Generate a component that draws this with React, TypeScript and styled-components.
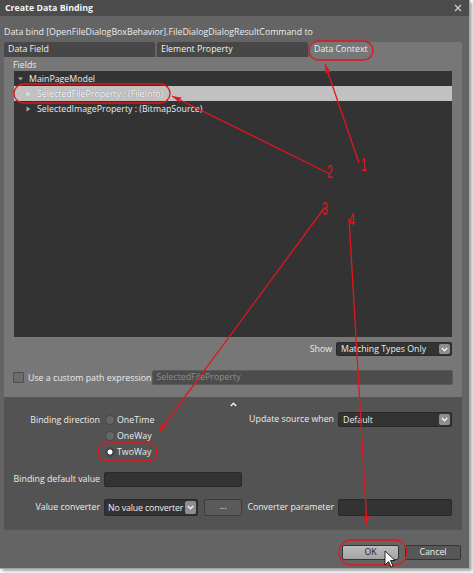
import React from "react";
import styled, { createGlobalStyle } from "styled-components";

const GlobalStyle = createGlobalStyle`
  html, body {
    margin: 0;
    background: #ffffff;
  }
  body {
    font-family: "Open Sans", "Noto Sans", sans-serif;
    font-size: 8.8px;
    color: #ececec;
  }
`;

const Page = styled.div`
  position: relative;
  width: 473px;
  height: 573px;
`;

const Dialog = styled.div`
  width: 470px;
  height: 569px;
  box-sizing: border-box;
  background: #646464;
  border-right: 1px solid #a4a4a4;
  border-bottom: 1px solid #a4a4a4;
  box-shadow: 2px 2px 3px rgba(0, 0, 0, 0.35);
  display: flex;
  flex-direction: column;
`;

const TitleBar = styled.div`
  height: 16px;
  flex: none;
  background: #4c4c4c;
  display: flex;
  align-items: center;
  justify-content: space-between;
  padding: 0 7px 0 5px;
  font-weight: 700;
  font-size: 8.8px;
  color: #f4f4f4;
`;

const Prompt = styled.div`
  height: 26px;
  box-sizing: border-box;
  padding: 6px 4px 0;
  line-height: 20px;
  white-space: nowrap;
`;

const TabStrip = styled.div`
  display: grid;
  grid-template-columns: 151px 151px 152px;
  column-gap: 2px;
  margin: 0 4px;
  height: 15px;
`;

const Tab = styled.div<{ $active?: boolean }>`
  background: ${(p) => (p.$active ? "#777777" : "#474747")};
  border-radius: 3px 3px 0 0;
  padding-left: 4px;
  line-height: 15px;
  color: #f0f0f0;
`;

const Panel = styled.div`
  width: 458px;
  margin: 0 4px;
  background: #777777;
  display: flex;
  flex-direction: column;
`;

const Upper = styled.div`
  padding: 3px 10px 12px;
  display: flex;
  flex-direction: column;
`;

const Caption = styled.div`
  line-height: 11px;
  margin-left: -1px;
`;

const Tree = styled.div`
  height: 266px;
  background: #333333;
`;

const TreeRow = styled.div<{ $level: number; $selected?: boolean }>`
  height: 15px;
  display: flex;
  align-items: center;
  padding-left: ${(p) => p.$level * 8 + 4}px;
  background: ${(p) => (p.$selected ? "#c1c1c1" : "transparent")};
  color: ${(p) => (p.$selected ? "#ffffff" : "#ececec")};
  text-shadow: ${(p) => (p.$selected ? "0 0 1px #6a6a6a" : "none")};
  white-space: nowrap;
`;

const Toggle = styled.svg`
  width: 5px;
  height: 6px;
  margin-right: 6px;
  flex: none;
`;

const ShowRow = styled.div`
  margin-top: 5px;
  height: 14px;
  display: flex;
  justify-content: flex-end;
  align-items: center;
  gap: 4px;
`;

const Select = styled.div<{ $width: number; $height: number; $compact?: boolean }>`
  width: ${(p) => p.$width}px;
  height: ${(p) => p.$height}px;
  box-sizing: border-box;
  display: flex;
  align-items: center;
  background: #333333;
  border: 1px solid #292929;
  border-radius: 2px;
  padding-left: ${(p) => (p.$compact ? 3 : 4)}px;
  letter-spacing: ${(p) => (p.$compact ? "-0.15px" : "normal")};
  white-space: nowrap;
  overflow: hidden;
`;

const SelectValue = styled.span`
  flex: 1;
  overflow: hidden;
`;

const DropButton = styled.div`
  flex: none;
  width: 11px;
  align-self: stretch;
  margin: 1px;
  background: #8e8e8e;
  border-radius: 2px;
  display: flex;
  align-items: center;
  justify-content: center;
`;

const PathRow = styled.div`
  margin-top: 14px;
  height: 15px;
  display: flex;
  align-items: center;
  white-space: nowrap;
`;

const Checkbox = styled.div`
  width: 11px;
  height: 11px;
  flex: none;
  box-sizing: border-box;
  margin-left: -1px;
  margin-right: 4px;
  border: 1px solid #4e4e4e;
  background: #6c6c6c;
  border-radius: 1px;
`;

const TextBox = styled.div<{ $muted?: boolean; $height?: number }>`
  height: ${(p) => p.$height ?? 15}px;
  box-sizing: border-box;
  background: ${(p) => (p.$muted ? "#4c4c4c" : "#333333")};
  border: 1px solid ${(p) => (p.$muted ? "#5a5a5a" : "#292929")};
  border-radius: 2px;
  padding-left: 4px;
  line-height: 13px;
  color: #8d8d8d;
`;

const PathInput = styled(TextBox)`
  margin-left: auto;
  width: 301px;
  flex: none;
`;

const Lower = styled.div`
  background: #535353;
  padding-bottom: 14px;
`;

const CollapseRow = styled.div`
  height: 15px;
  display: flex;
  align-items: center;
  justify-content: center;
`;

const FormGrid = styled.div`
  display: grid;
  grid-template-columns: 96px 138px 88px 114px;
  column-gap: 4px;
  row-gap: 12px;
`;

const FieldLabel = styled.div<{ $height?: number }>`
  text-align: right;
  align-self: start;
  line-height: ${(p) => p.$height ?? 15}px;
  white-space: nowrap;
`;

const RadioGroup = styled.div`
  display: flex;
  flex-direction: column;
`;

const RadioItem = styled.div`
  height: 16px;
  display: flex;
  align-items: center;
  gap: 2px;
`;

const RadioDot = styled.div<{ $checked?: boolean }>`
  width: 10px;
  height: 10px;
  box-sizing: border-box;
  margin-left: 1px;
  border-radius: 50%;
  border: 1px solid #474747;
  background: ${(p) =>
    p.$checked
      ? "radial-gradient(circle, #ffffff 0 2.2px, #444444 2.8px)"
      : "#666666"};
`;

const ConverterCell = styled.div`
  display: flex;
  gap: 6px;
`;

const SmallButton = styled.div`
  width: 38px;
  height: 17px;
  box-sizing: border-box;
  border: 1px solid #3c3c3c;
  border-radius: 2px;
  background: #5a5a5a;
  text-align: center;
  line-height: 13px;
`;

const Footer = styled.div`
  display: flex;
  justify-content: flex-end;
  gap: 6px;
  padding: 15px 8px 0 0;
`;

const Button = styled.div<{ $primary?: boolean; $width: number }>`
  width: ${(p) => p.$width}px;
  height: 15px;
  box-sizing: border-box;
  border: 1px solid #353535;
  border-radius: 2px;
  text-align: center;
  line-height: 13px;
  background: ${(p) =>
    p.$primary ? "linear-gradient(#bdbdbd, #a4a4a4)" : "#575757"};
  color: ${(p) => (p.$primary ? "#1e1e1e" : "#efefef")};
`;

const Overlay = styled.svg`
  position: absolute;
  left: 0;
  top: 0;
  pointer-events: none;
`;

const Chevron = ({ up }: { up?: boolean }) => (
  <svg width="7" height="5" viewBox="0 0 7 5">
    <path
      d={up ? "M0.8 4 L3.5 1.3 L6.2 4" : "M0.8 1 L3.5 3.7 L6.2 1"}
      fill="none"
      stroke="#f2f2f2"
      strokeWidth="1.4"
    />
  </svg>
);

const Expander = ({ open, color }: { open?: boolean; color: string }) => (
  <Toggle viewBox="0 0 5 6">
    <path d={open ? "M0 1.5 L5 1.5 L2.5 4.5 Z" : "M0.5 0.5 L4.5 3 L0.5 5.5 Z"} fill={color} />
  </Toggle>
);

const RED = "#e3161d";

const arrows = [
  { x1: 359, y1: 163, x2: 325, y2: 64 },
  { x1: 330, y1: 174, x2: 172, y2: 96 },
  { x1: 325, y1: 207, x2: 159, y2: 432 },
  { x1: 349, y1: 218, x2: 367, y2: 525 },
];

const marks = [
  { n: "1", x: 361, y: 171 },
  { n: "2", x: 327, y: 178 },
  { n: "3", x: 322, y: 215 },
  { n: "4", x: 349, y: 226 },
];

const rings = [
  { x: 309, y: 41, w: 64, h: 19 },
  { x: 14, y: 84, w: 156, h: 19 },
  { x: 98, y: 443, w: 59, h: 18 },
  { x: 339, y: 540, w: 68, h: 25 },
];

function Annotations() {
  return (
    <Overlay width="473" height="573" viewBox="0 0 473 573">
      <defs>
        <marker id="tip" viewBox="0 0 10 6" refX="10" refY="3" markerWidth="10" markerHeight="6" markerUnits="userSpaceOnUse" orient="auto">
          <path d="M0 0 L10 3 L0 6 L2 3 Z" fill={RED} />
        </marker>
      </defs>
      {rings.map((r, i) => (
        <rect key={i} x={r.x} y={r.y} width={r.w} height={r.h} rx={r.h / 2} fill="none" stroke={RED} strokeWidth="1.3" />
      ))}
      {arrows.map((a, i) => (
        <line key={i} {...a} stroke={RED} strokeWidth="1.3" markerEnd="url(#tip)" />
      ))}
      {marks.map((m) => (
        <text
          key={m.n}
          transform={`translate(${m.x} ${m.y}) scale(0.55 1)`}
          fill={RED}
          fontSize="19"
          fontFamily='"Liberation Sans", sans-serif'
        >
          {m.n}
        </text>
      ))}
      <path
        d="M385 551 L385 565 L388.5 561.5 L391 567 L393 566 L390.5 560.5 L395 560.5 Z"
        fill="#ffffff"
        stroke="#000000"
        strokeWidth="0.8"
        strokeLinejoin="round"
      />
    </Overlay>
  );
}

export default function App() {
  return (
    <Page>
      <GlobalStyle />
      <Dialog>
        <TitleBar>
          <span>Create Data Binding</span>
          <svg width="8" height="8" viewBox="0 0 8 8">
            <path d="M1 1 L7 7 M7 1 L1 7" stroke="#cfcfcf" strokeWidth="1.2" />
          </svg>
        </TitleBar>
        <Prompt>Data bind [OpenFileDialogBoxBehavior].FileDialogDialogResultCommand to</Prompt>
        <TabStrip>
          <Tab>Data Field</Tab>
          <Tab>Element Property</Tab>
          <Tab $active>Data Context</Tab>
        </TabStrip>
        <Panel>
          <Upper>
            <Caption>Fields</Caption>
            <Tree>
              <TreeRow $level={0}>
                <Expander open color="#a8a8a8" />
                MainPageModel
              </TreeRow>
              <TreeRow $level={1} $selected>
                <Expander color="#dedede" />
                SelectedFileProperty : (FileInfo)
              </TreeRow>
              <TreeRow $level={1}>
                <Expander color="#a8a8a8" />
                SelectedImageProperty : (BitmapSource)
              </TreeRow>
            </Tree>
            <ShowRow>
              <span>Show</span>
              <Select $width={116} $height={14}>
                <SelectValue>Matching Types Only</SelectValue>
                <DropButton>
                  <Chevron />
                </DropButton>
              </Select>
            </ShowRow>
            <PathRow>
              <Checkbox />
              <span>Use a custom path expression</span>
              <PathInput $muted>SelectedFileProperty</PathInput>
            </PathRow>
          </Upper>
          <Lower>
            <CollapseRow>
              <Chevron up />
            </CollapseRow>
            <FormGrid>
              <FieldLabel $height={16}>Binding direction</FieldLabel>
              <RadioGroup>
                <RadioItem>
                  <RadioDot />
                  OneTime
                </RadioItem>
                <RadioItem>
                  <RadioDot />
                  OneWay
                </RadioItem>
                <RadioItem>
                  <RadioDot $checked />
                  TwoWay
                </RadioItem>
              </RadioGroup>
              <FieldLabel>Update source when</FieldLabel>
              <Select $width={114} $height={15}>
                <SelectValue>Default</SelectValue>
                <DropButton>
                  <Chevron />
                </DropButton>
              </Select>

              <FieldLabel>Binding default value</FieldLabel>
              <TextBox />
              <div />
              <div />

              <FieldLabel $height={17}>Value converter</FieldLabel>
              <ConverterCell>
                <Select $width={94} $height={17} $compact>
                  <SelectValue>No value converter</SelectValue>
                  <DropButton>
                    <Chevron />
                  </DropButton>
                </Select>
                <SmallButton>...</SmallButton>
              </ConverterCell>
              <FieldLabel $height={17}>Converter parameter</FieldLabel>
              <TextBox $height={17} />
            </FormGrid>
          </Lower>
        </Panel>
        <Footer>
          <Button $primary $width={57}>OK</Button>
          <Button $width={56}>Cancel</Button>
        </Footer>
      </Dialog>
      <Annotations />
    </Page>
  );
}
